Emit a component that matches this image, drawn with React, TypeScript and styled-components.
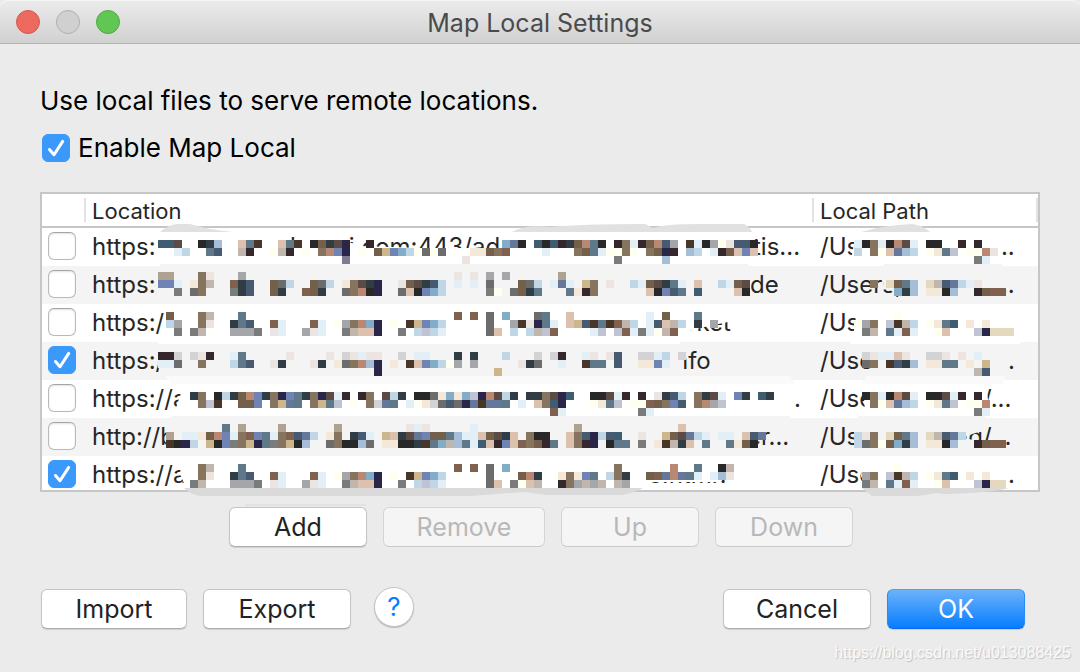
import React from "react";
import styled, { createGlobalStyle, css } from "styled-components";

const GlobalStyle = createGlobalStyle`
  *, *::before, *::after { box-sizing: border-box; }
  body {
    margin: 0;
    background: #ebebeb;
    color: #000;
    font-family: Inter, Roboto, "Liberation Sans", sans-serif;
    font-size: 24px;
  }
`;

const Window = styled.main`
  position: relative;
  min-height: 100vh;
  overflow: hidden;
  background: #ebebeb;
`;

const TitleBar = styled.header`
  display: grid;
  grid-template-columns: 1fr auto 1fr;
  align-items: center;
  height: 44px;
  padding: 0 16px;
  border-top: 1px solid #f6f6f6;
  border-bottom: 1px solid #b2b2b2;
  border-top-left-radius: 8px;
  border-top-right-radius: 8px;
  background: linear-gradient(#ebebeb, #d1d1d1);
`;

const Lights = styled.div`
  display: flex;
  gap: 16px;
`;

const Light = styled.button<{ $fill: string; $edge: string }>`
  width: 24px;
  height: 24px;
  padding: 0;
  border: 1px solid ${(p) => p.$edge};
  border-radius: 50%;
  background: ${(p) => p.$fill};
`;

const Title = styled.h1`
  margin: 0;
  padding-top: 2px;
  color: #4b4b4b;
  font-size: 25px;
  font-weight: 400;
  line-height: 32px;
`;

const Body = styled.div`
  padding: 40px 40px 0;
`;

const Intro = styled.p`
  margin: 0;
  font-size: 26px;
  line-height: 34px;
`;

const EnableRow = styled.label`
  display: flex;
  align-items: center;
  gap: 8px;
  margin: 14px 0 28px 2px;
  font-size: 26px;
  line-height: 32px;
`;

const Tick = styled.span`
  position: relative;
  display: block;
  flex: none;
  width: 28px;
  height: 28px;

  input {
    appearance: none;
    display: block;
    width: 28px;
    height: 28px;
    margin: 0;
    border: 1px solid #b9b9b9;
    border-top-color: #a4a4a4;
    border-radius: 6px;
    background: #fff;
    box-shadow: inset 0 1px 2px rgba(0, 0, 0, 0.12);
  }
  input:checked {
    border-color: #3b99fc;
    background: #3b99fc;
    box-shadow: none;
  }
  svg {
    position: absolute;
    inset: 0;
    pointer-events: none;
  }
  input:not(:checked) + svg { display: none; }
`;

const Frame = styled.section`
  position: relative;
  border: 2px solid #c6c6c6;
  background: #fff;
`;

const Viewport = styled.div`
  height: 296px;
  overflow: hidden;
`;

const Table = styled.table`
  width: 100%;
  table-layout: fixed;
  border-collapse: separate;
  border-spacing: 0;
  color: #262626;
`;

const HeadCell = styled.th`
  height: 34px;
  padding: 0;
  border-bottom: 2px solid #c6c6c6;
  font-size: 22px;
  font-weight: 400;
  line-height: 26px;
  text-align: left;

  span {
    display: block;
    height: 24px;
    padding-left: 6px;
    border-right: 2px solid #e2e2e2;
  }
`;

const Row = styled.tr`
  &:nth-child(even) { background: #f4f4f4; }
`;

const Cell = styled.td`
  height: 38px;
  padding: 0 0 0 6px;
  overflow: hidden;
  font-size: 24px;
  line-height: 38px;
  white-space: nowrap;
`;

const TickCell = styled(Cell)`
  padding-bottom: 2px;
`;

const Pieces = styled.div`
  display: flex;
`;

const Piece = styled.span<{ $slot?: number }>`
  flex: 0 0 ${(p) => (p.$slot ? `${p.$slot}px` : "auto")};
`;

const Smudge = styled.svg<{ $side: "left" | "right" }>`
  position: absolute;
  top: 26px;
  pointer-events: none;
  ${(p) => (p.$side === "left" ? css`left: 108px;` : css`right: 8px;`)}
`;

const Actions = styled.div`
  display: flex;
  justify-content: center;
  gap: 16px;
  padding: 15px 0 42px 2px;
`;

const Footer = styled.footer`
  display: flex;
  align-items: center;
  gap: 16px;
  padding: 0 15px 0 1px;
`;

const Spacer = styled.div`
  flex: 1;
`;

const Button = styled.button<{ $width: number; $primary?: boolean }>`
  width: ${(p) => p.$width}px;
  height: 40px;
  padding: 0;
  border: 1px solid #c4c4c4;
  border-bottom-color: #adadad;
  border-radius: 6px;
  background: #fff;
  box-shadow: 0 1px 1px rgba(0, 0, 0, 0.12);
  color: #222;
  font: inherit;
  font-size: 25px;
  line-height: 32px;

  &:disabled {
    border-color: #d4d4d4;
    border-bottom-color: #cacaca;
    background: #f5f5f5;
    box-shadow: none;
    color: #b8b8b8;
  }
  ${(p) =>
    p.$primary &&
    css`
      border-color: #4ba0f8 #2a88f8 #0a66f2;
      background: linear-gradient(#6cb3fa, #067dff);
      color: #fff;
    `}
`;

const Help = styled.button`
  width: 40px;
  height: 40px;
  margin: -4px 0 0 7px;
  padding: 0;
  border: 1px solid #c4c4c4;
  border-radius: 50%;
  background: #fff;
  box-shadow: 0 1px 1px rgba(0, 0, 0, 0.2);
  color: #087dff;
  font: inherit;
  font-size: 26px;
  line-height: 36px;
`;

const Watermark = styled.div`
  position: absolute;
  right: 9px;
  bottom: 9px;
  color: #fafafa;
  font-family: "Liberation Sans", Arial, sans-serif;
  font-size: 16px;
  line-height: 20px;
  text-shadow: 1px 1px 1px #c0c0c0;
`;

function CheckBox({ checked, id, label }: { checked: boolean; id?: string; label?: string }) {
  return (
    <Tick>
      <input id={id} type="checkbox" defaultChecked={checked} aria-label={label} />
      <svg width="28" height="28" viewBox="0 0 28 28" aria-hidden="true">
        <path d="M7.5 15.5 12 20.7 20.7 7.4" fill="none" stroke="#fff" strokeWidth="3" strokeLinecap="round" strokeLinejoin="round" />
      </svg>
    </Tick>
  );
}

type Part = [at: number, text: string];
type Mapping = { on: boolean; location: Part[]; path: Part[] };

const mappings: Mapping[] = [
  { on: false, location: [[0, "https:"], [198, "h"], [242, "gi.com:443/ad"], [661, "tis..."]], path: [[0, "/Us"], [114, "per"], [174, "..."]] },
  { on: false, location: [[0, "https:/"], [162, "a.c"], [658, "de"]], path: [[0, "/Users,"], [174, "..."]] },
  { on: false, location: [[0, "https:/"], [595, "rket"]], path: [[0, "/Us"]] },
  { on: true, location: [[0, "https:/"], [582, "nfo"]], path: [[0, "/Use"], [188, "."]] },
  { on: false, location: [[0, "https://a"], [702, "."]], path: [[0, "/Use"], [163, "/..."]] },
  { on: false, location: [[0, "http://b"], [655, "er..."]], path: [[0, "/Us"], [134, "ng/..."]] },
  { on: true, location: [[0, "https://a"], [556, "c.html?"]], path: [[0, "/Use"], [188, "."]] },
];

function Spread({ parts }: { parts: Part[] }) {
  return (
    <Pieces>
      {parts.map(([at, text], i) => (
        <Piece key={at} $slot={i + 1 < parts.length ? parts[i + 1][0] - at : undefined}>
          {text}
        </Piece>
      ))}
    </Pieces>
  );
}

const palette: Record<string, string> = {
  k: "#282828", K: "#35282c", n: "#29264a", N: "#7d7b95", b: "#86745e", B: "#74604a",
  o: "#5c4a44", D: "#483628", r: "#b98872", R: "#80604f", s: "#5f788a", S: "#465a72",
  t: "#3f5d70", u: "#7083b5", U: "#65789a", a: "#a6bdd8", l: "#bfd6e6", c: "#82adc9",
  g: "#6c6c6c", G: "#a4a6aa", e: "#7a7b7b", w: "#e2eff7", p: "#ebe4e0", y: "#fffff0",
  f: "#f4e9d8", d: "#cdb68c", i: "#303d45", m: "#c0b6ae", M: "#b0a292", h: "#c0c3d2",
  v: "#dcc2ae", q: "#d3d3d5", x: "#e4d8be",
};

type Strip = [y: number, ...runs: (number | string)[]];

const locationTiles: Strip[] = [
  [240, 0, "tto", 5, "kia", 10, "vsD", 15, "vsD", 19, "kBion", 26, "K", 43, "cUk", 47, "tktKiBrsk", 57, "KbwKBrSG", 66, "DwkGypSSk"],
  [248, 2, "wl", 6, "sS", 10, "mK", 14, "ymK", 18, "y", 20, "brun", 25, "y", 27, "Bduclygyg", 39, "ffBbR", 48, "w", 52, "bBswyyby", 61, "bBnK", 66, "al.wKBvuv"],
  [256, 23, "N", 38, "p", 57, "e", 63, "a"],
  [272, 0, "MM", 5, "bp", 10, "G", 37, "p.p.G.G", 50, "M"],
  [280, 0, "uuw", 4, "fbm", 9, "RiS", 14, "Bgl", 19, "Bgl", 23, "fboin", 30, "pBoiSl", 37, "w.w.g", 45, "Bgl.wUw", 53, "db", 56, "p", 59, "lwBoisw", 67, "v", 70, "lwBo"],
  [288, 2, "e", 4, "gb", 9, "eiS", 14, "Bi", 18, "RBi", 23, "gbrkn", 30, "gvkucl", 41, "ey", 44, "gBis", 51, "sfKb", 61, "vkuSs", 67, "t", 72, "vk"],
  [312, 1, "B", 5, "bm", 10, "s", 37, "R.R.g.c", 47, "gs", 51, "v", 61, "w.B", 67, "s"],
  [320, 1, "lG", 5, "bp", 9, "isS", 14, "Rw", 19, "Rw.yGbrcn", 29, "y.Dducl", 41, "g", 44, "GDpnsw", 51, "vdSDsDRml", 61, "wSvml", 67, "i.G"],
  [328, 2, "e.em", 9, "GGGe", 14, "pw", 18, "Gpw", 23, "emvvn", 30, "e.lhlw", 41, "gv.l.lmhR", 54, "wh.hRwewymR"],
  [352, 0, "KKq.qpK", 9, "ws", 16, "p", 21, "p.qpwpp", 30, "q.ww", 37, "i.i", 43, "l", 47, "q.qK", 53, "wp.pS", 60, "qqwl.q"],
  [360, 0, "wwg", 5, "b", 9, "lsS", 14, "pi", 19, "pi.fgbran", 29, "f.DvuclyG.G", 45, "pig", 50, "w", 53, "Dss.S", 60, "ffuw"],
  [368, 27, "n", 42, "d"],
  [392, 4, "ib", 7, "kliBruibnusibnowK", 25, "Kb.oli.kkgfcfchnroli.iibont", 54, "kkowK.K.piSl", 67, "biow.ui.ti"],
  [400, 5, "bhD", 10, "BBu.bdUs", 19, "bdsh.y.bqUs.wyfqgSgnUDUUs.w.vbtn", 54, "yfsh.yyRBbuS", 67, "brGh"],
  [408, 49, "Rw", 60, "ew"],
  [424, 8, "s.M", 15, "M", 22, "M", 31, "pwp", 39, "w", 52, "M", 65, "v"],
  [432, 1, "M.wwfBruwbRuswbRSUl", 21, "fb.iSw", 28, "dvioUuBBsawwvBoiv.bkk", 51, "vbSnlSt", 60, "p", 63, "dBoUlw", 70, "ww.vSU"],
  [440, 1, "Dknl", 6, "dkuebdnsebdka", 21, "gbkkag", 28, "ffkkiDscmaswtvKuvRbBKs", 51, "vbKn.kss.e.fDmiv.s", 71, "sfBk"],
  [464, 5, "bm", 10, "s", 37, "R.R.g.c", 57, "b", 64, "r..s..km"],
  [472, 5, "bp", 9, "isS", 14, "Rw", 19, "Rw.yGbrcn", 29, "y.Dducl", 41, "g", 45, "Bri", 50, "fbfus.lbi", 61, "BRUrUsw.wap"],
  [480, 4, "em", 9, "GGGe", 14, "pw", 18, "Gpw", 23, "emvvn", 30, "e.lhlw", 41, "gv.eyvm", 50, "KbGmGm.mG"],
];

const pathTiles: Strip[] = [
  [240, 87, "wkbwkrow.kk", 100, "K.K"],
  [248, 87, "l.byvUal.yfsh.yyrp"],
  [256, 102, "ew"],
  [280, 89, "b.xBsa.xmSUlwp"],
  [288, 92, "cia.ffka..KBRR"],
  [312, 92, "y"],
  [320, 87, "yGb.hDml.yfst.f.f"],
  [328, 88, "em.swRw..yv...hnxxx"],
  [352, 88, "qpwwvp..qqp.p.w"],
  [360, 88, "gb.DSia.ffss.f.d"],
  [368, 102, "mS"],
  [392, 88, "kbwkrow.kkowK.K"],
  [400, 89, "byvUal.yfsh.yyr"],
  [408, 102, "ew"],
  [432, 87, "lpb.xBsa.xmSUl"],
  [440, 87, "lgbyBcia.ffka..KBRR"],
  [464, 92, "y"],
  [472, 88, "Gb.hDml.yfst.f.f"],
  [480, 88, "em.swRw..yv...hnxx"],
];

function Tiles({ strips }: { strips: Strip[] }) {
  const tiles: React.ReactElement[] = [];
  for (const [y, ...runs] of strips) {
    for (let i = 0; i < runs.length; i += 2) {
      const start = runs[i] as number;
      [...(runs[i + 1] as string)].forEach((tone, n) => {
        if (tone === ".") return;
        tiles.push(
          <rect key={`${y}-${start + n}`} x={158 + (start + n) * 8} y={y} width="8" height="8" fill={palette[tone]} />,
        );
      });
    }
  }
  return <g shapeRendering="crispEdges">{tiles}</g>;
}

function LocationSmudge() {
  return (
    <Smudge $side="left" width="660" height="290" viewBox="150 220 660 290" aria-hidden="true">
      <path fill="#e1e1e1" d="M160 232Q170 224 178 224H190Q205 229 233 232ZM512 232Q525 224 550 227Q580 224 645 224L653 228Q665 224 700 224H744Q750 227 752 232Z" />
      <path fill="#fff" d="M157 232H286L290 240H304L310 232H328L334 243H352L360 246 420 248H510V232H752L754 264H156Z" />
      <path fill="#f4f4f4" d="M160 264H748L750 304H155L158 276ZM155 344H680V376H160Z" />
      <path fill="#fff" d="M168 304H750V320L728 322 700 328 680 334V344H158L163 328Z" />
      <path fill="#fafafa" d="M165 376H790L795 384H172Z" />
      <path fill="#fff" d="M184 384H793V416H180L176 408Z" />
      <path fill="#f4f4f4" d="M172 416H790V420H774L750 448V456H168V432Z" />
      <path fill="#fff" d="M182 456H740L732 472 720 482H650V488H186L180 474Z" />
      <path fill="#dadada" d="M184 488H643Q632 494 620 495H548Q535 494 525 492L470 496H200Q190 494 184 488Z" />
      <path fill="#e2e2e2" d="M245 504H366V506H245Z" />
      <Tiles strips={locationTiles} />
    </Smudge>
  );
}

function PathSmudge() {
  return (
    <Smudge $side="right" width="190" height="290" viewBox="840 220 190 290" aria-hidden="true">
      <path fill="#e1e1e1" d="M861 232Q885 225 912 224Q922 225 930 232Z" />
      <path fill="#fff" d="M858 232H990L992 240 1002 256V264H850L854 244ZM858 304H1020V344H850L854 330Z" />
      <path fill="#f4f4f4" d="M884 264H1002V304H910L890 290 884 286ZM856 344H1005V376H868L872 366 864 358Z" />
      <path fill="#fafafa" d="M866 376H1006L1002 384H862Z" />
      <path fill="#fff" d="M866 384H986L990 416H866L864 402Z" />
      <path fill="#f4f4f4" d="M858 416H985V430L960 438 975 440H1002V456H855L854 438Z" />
      <path fill="#fff" d="M863 456H1008V488H866L861 476Z" />
      <path fill="#dadada" d="M862 488H1009Q990 493 945 494L936 493Q922 496 914 496H872Z" />
      <Tiles strips={pathTiles} />
    </Smudge>
  );
}

export default function App() {
  return (
    <>
      <GlobalStyle />
      <Window>
        <TitleBar>
          <Lights>
            <Light aria-label="Close" $fill="#ed6a5f" $edge="#d8574c" />
            <Light aria-label="Minimize" $fill="#d0d0d0" $edge="#b0b0b0" />
            <Light aria-label="Zoom" $fill="#62c655" $edge="#52a842" />
          </Lights>
          <Title>Map Local Settings</Title>
        </TitleBar>
        <Body>
          <Intro>Use local files to serve remote locations.</Intro>
          <EnableRow htmlFor="enable-map-local">
            <CheckBox id="enable-map-local" checked />
            Enable Map Local
          </EnableRow>
          <Frame>
            <Viewport>
              <Table>
                <colgroup>
                  <col style={{ width: 44 }} />
                  <col />
                  <col style={{ width: 224 }} />
                </colgroup>
                <thead>
                  <tr>
                    <HeadCell aria-label="Enabled"><span /></HeadCell>
                    <HeadCell><span>Location</span></HeadCell>
                    <HeadCell><span>Local Path</span></HeadCell>
                  </tr>
                </thead>
                <tbody>
                  {mappings.map((m, i) => (
                    <Row key={i}>
                      <TickCell><CheckBox checked={m.on} label={`Enable mapping ${i + 1}`} /></TickCell>
                      <Cell><Spread parts={m.location} /></Cell>
                      <Cell><Spread parts={m.path} /></Cell>
                    </Row>
                  ))}
                </tbody>
              </Table>
            </Viewport>
            <LocationSmudge />
            <PathSmudge />
          </Frame>
          <Actions>
            <Button $width={138}>Add</Button>
            <Button $width={162} disabled>Remove</Button>
            <Button $width={138} disabled>Up</Button>
            <Button $width={138} disabled>Down</Button>
          </Actions>
          <Footer>
            <Button $width={146}>Import</Button>
            <Button $width={148}>Export</Button>
            <Help aria-label="Help">?</Help>
            <Spacer />
            <Button $width={148}>Cancel</Button>
            <Button $width={138} $primary>OK</Button>
          </Footer>
        </Body>
        <Watermark>https://blog.csdn.net/u013088425</Watermark>
      </Window>
    </>
  );
}
